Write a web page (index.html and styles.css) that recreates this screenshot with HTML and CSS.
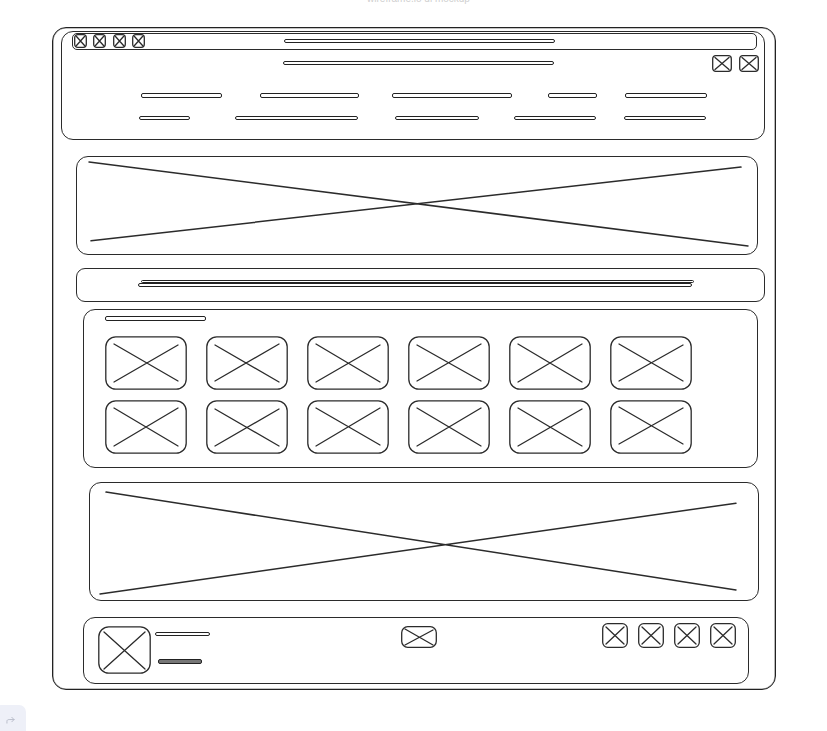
FILE: index.html
```html
<!DOCTYPE html>
<html lang="en">
<head>
<meta charset="UTF-8" />
<meta name="viewport" content="width=device-width, initial-scale=1" />
<title>Landing page wireframe</title>
<link rel="stylesheet" href="styles.css">
</head>
<body>

<div class="caption"><span>wireframe.io ui mockup</span></div>

<div class="frame">

  <!-- browser chrome + header nav -->
  <header class="head box">
    <div class="topbar">
      <svg class="chk" viewBox="0 0 13 14"><rect x="0.7" y="0.7" width="11.6" height="12.6" rx="3"/><path d="M2.5 2.5L10.5 11.5M10.5 2.5L2.5 11.5"/></svg>
      <svg class="chk" viewBox="0 0 13 14"><rect x="0.7" y="0.7" width="11.6" height="12.6" rx="3"/><path d="M2.5 2.5L10.5 11.5M10.5 2.5L2.5 11.5"/></svg>
      <svg class="chk" viewBox="0 0 13 14"><rect x="0.7" y="0.7" width="11.6" height="12.6" rx="3"/><path d="M2.5 2.5L10.5 11.5M10.5 2.5L2.5 11.5"/></svg>
      <svg class="chk" viewBox="0 0 13 14"><rect x="0.7" y="0.7" width="11.6" height="12.6" rx="3"/><path d="M2.5 2.5L10.5 11.5M10.5 2.5L2.5 11.5"/></svg>
      <span class="bar url"></span>
    </div>
    <div class="head-row">
      <span class="bar title"></span>
      <div class="head-icons">
        <svg class="ico-md" viewBox="0 0 20 17"><rect x="0.7" y="0.7" width="18.6" height="15.6" rx="3"/><path d="M3 2.5L17 14.5M17 2.5L3 14.5"/></svg>
        <svg class="ico-md" viewBox="0 0 20 17"><rect x="0.7" y="0.7" width="18.6" height="15.6" rx="3"/><path d="M3 2.5L17 14.5M17 2.5L3 14.5"/></svg>
      </div>
    </div>
    <nav class="nav-row one">
      <span class="bar"></span><span class="bar"></span><span class="bar"></span><span class="bar"></span><span class="bar"></span>
    </nav>
    <nav class="nav-row two">
      <span class="bar"></span><span class="bar"></span><span class="bar"></span><span class="bar"></span><span class="bar"></span>
    </nav>
  </header>

  <!-- hero image -->
  <section class="hero box">
    <svg viewBox="0 0 679 96" preserveAspectRatio="none"><path d="M12 5L670 88M14 83L663 10"/></svg>
  </section>

  <!-- headline strip -->
  <section class="strip box">
    <span class="bar line-a"></span>
    <span class="bar line-b"></span>
  </section>

  <!-- gallery -->
  <section class="gallery box">
    <span class="bar label"></span>
    <div class="tiles">
      <svg class="tile" viewBox="0 0 82 54"><rect x="0.8" y="0.8" width="80.4" height="52.4" rx="10"/><path d="M9 8L73 45M9 46L73 9"/></svg>
      <svg class="tile" viewBox="0 0 82 54"><rect x="0.8" y="0.8" width="80.4" height="52.4" rx="10"/><path d="M9 9L73 46M9 45L73 8"/></svg>
      <svg class="tile" viewBox="0 0 82 54"><rect x="0.8" y="0.8" width="80.4" height="52.4" rx="10"/><path d="M9 8L73 46M9 46L73 9"/></svg>
      <svg class="tile" viewBox="0 0 82 54"><rect x="0.8" y="0.8" width="80.4" height="52.4" rx="10"/><path d="M9 9L73 45M9 45L73 8"/></svg>
      <svg class="tile" viewBox="0 0 82 54"><rect x="0.8" y="0.8" width="80.4" height="52.4" rx="10"/><path d="M9 8L73 46M9 46L73 8"/></svg>
      <svg class="tile" viewBox="0 0 82 54"><rect x="0.8" y="0.8" width="80.4" height="52.4" rx="10"/><path d="M9 8L73 45M9 45L73 9"/></svg>
      <svg class="tile" viewBox="0 0 82 54"><rect x="0.8" y="0.8" width="80.4" height="52.4" rx="10"/><path d="M9 8L73 46M9 46L73 8"/></svg>
      <svg class="tile" viewBox="0 0 82 54"><rect x="0.8" y="0.8" width="80.4" height="52.4" rx="10"/><path d="M9 9L73 46M9 46L73 9"/></svg>
      <svg class="tile" viewBox="0 0 82 54"><rect x="0.8" y="0.8" width="80.4" height="52.4" rx="10"/><path d="M9 8L73 45M9 46L73 8"/></svg>
      <svg class="tile" viewBox="0 0 82 54"><rect x="0.8" y="0.8" width="80.4" height="52.4" rx="10"/><path d="M9 8L73 46M9 46L73 8"/></svg>
      <svg class="tile" viewBox="0 0 82 54"><rect x="0.8" y="0.8" width="80.4" height="52.4" rx="10"/><path d="M9 8L73 46M9 46L73 9"/></svg>
      <svg class="tile" viewBox="0 0 82 54"><rect x="0.8" y="0.8" width="80.4" height="52.4" rx="10"/><path d="M9 7L73 44M9 44L73 8"/></svg>
    </div>
  </section>

  <!-- second banner -->
  <section class="hero hero-2 box">
    <svg viewBox="0 0 667 116" preserveAspectRatio="none"><path d="M16 9L645 106M10 110L645 20"/></svg>
  </section>

  <!-- footer -->
  <footer class="foot box">
    <div class="foot-left">
      <svg class="avatar" viewBox="0 0 53 48"><rect x="0.8" y="0.8" width="51.4" height="46.4" rx="10"/><path d="M6 6L47 43M6 43L47 6"/></svg>
      <div class="foot-text">
        <span class="bar name"></span>
        <span class="bar sub"></span>
      </div>
    </div>
    <svg class="ico-mail" viewBox="0 0 36 22"><rect x="0.7" y="0.7" width="34.6" height="20.6" rx="6"/><path d="M4 3L32 19M4 19L32 4"/></svg>
    <div class="socials">
      <svg class="ico-sm" viewBox="0 0 26 25"><rect x="0.7" y="0.7" width="24.6" height="23.6" rx="5"/><path d="M4 4L22 21M22 4L4 21"/></svg>
      <svg class="ico-sm" viewBox="0 0 26 25"><rect x="0.7" y="0.7" width="24.6" height="23.6" rx="5"/><path d="M4 4L22 21M22 4L4 21"/></svg>
      <svg class="ico-sm" viewBox="0 0 26 25"><rect x="0.7" y="0.7" width="24.6" height="23.6" rx="5"/><path d="M4 4L22 21M22 4L4 21"/></svg>
      <svg class="ico-sm" viewBox="0 0 26 25"><rect x="0.7" y="0.7" width="24.6" height="23.6" rx="5"/><path d="M4 4L22 21M22 4L4 21"/></svg>
    </div>
  </footer>

</div>

<div class="corner-widget">
  <svg viewBox="0 0 10 9"><path d="M1 8V6C1 4.5 2 4 3.5 4H9M6.5 1.5L9 4L6.5 6.5"/></svg>
</div>

</body>
</html>
```

FILE: styles.css
```css
:root {
  --ink: #2b2b2b;
  --paper: #fff;
}
body {
  margin: 0;
  font-family: "Liberation Sans", Arial, sans-serif;
  background-color: var(--paper);
  color: var(--ink);
}

/* faint page caption, clipped at the top edge */
.caption {
  height: 4px;
  overflow: hidden;
  display: flex;
  justify-content: center;
  align-items: flex-end;
}
.caption span {
  font-size: 10px;
  line-height: 10px;
  color: #cfcfcf;
  padding-left: 10px;
}

svg rect,
svg path {
  fill: none;
  stroke: var(--ink);
  stroke-width: 1.3;
  stroke-linecap: round;
  vector-effect: non-scaling-stroke;
}

.frame {
  width: 724px;
  height: 663px;
  margin: 23px 0 0 52px;
  border: 1.6px solid #222;
  border-radius: 14px;
  box-sizing: border-box;
  display: flex;
  flex-direction: column;
  align-items: flex-start;
  box-shadow: inset 0 0 0 0.6px #888;
}
.box {
  border: 1.5px solid var(--ink);
  border-radius: 12px;
  box-sizing: border-box;
  flex: none;
}
.bar {
  display: block;
  height: 4.5px;
  border: 1.2px solid #222;
  border-radius: 2px;
  box-sizing: border-box;
  flex: none;
}

/* header */
.head {
  margin: 3px 0 0 8px;
  width: 704px;
  height: 109px;
  display: flex;
  flex-direction: column;
}
.topbar {
  margin: 0.5px 7.5px 0 9.5px;
  height: 17px;
  border: 1.3px solid var(--ink);
  border-radius: 5px;
  box-sizing: border-box;
  display: flex;
  align-items: center;
  gap: 6.5px;
  padding-left: 1px;
}
.chk {
  width: 13px;
  height: 14px;
  flex: none;
}
.url {
  margin-left: 132px;
  width: 271px;
}
.head-row {
  margin-top: 5px;
  height: 17px;
  display: flex;
  align-items: center;
  padding-right: 5px;
}
.title {
  margin-left: 221px;
  width: 271px;
}
.head-icons {
  margin-left: auto;
  display: flex;
  gap: 7px;
}
.ico-md {
  width: 20px;
  height: 17px;
}
.nav-row {
  display: flex;
  height: 4.5px;
}
.nav-row.one { margin-top: 21.5px; }
.nav-row.two { margin-top: 18px; }

.nav-row.one .bar:nth-child(1) { margin-left: 79px; width: 81px; }
.nav-row.one .bar:nth-child(2) { margin-left: 38px; width: 99px; }
.nav-row.one .bar:nth-child(3) { margin-left: 33px; width: 120px; }
.nav-row.one .bar:nth-child(4) { margin-left: 36px; width: 49px; }
.nav-row.one .bar:nth-child(5) { margin-left: 28px; width: 82px; }

.nav-row.two .bar:nth-child(1) { margin-left: 77px; width: 51px; }
.nav-row.two .bar:nth-child(2) { margin-left: 45px; width: 123px; }
.nav-row.two .bar:nth-child(3) { margin-left: 37px; width: 84px; }
.nav-row.two .bar:nth-child(4) { margin-left: 35px; width: 82px; }
.nav-row.two .bar:nth-child(5) { margin-left: 28px; width: 82px; }

/* image placeholders */
.hero {
  margin: 16px 0 0 23px;
  width: 682px;
  height: 99px;
}
.hero svg {
  display: block;
  width: 100%;
  height: 100%;
}
.hero svg path { stroke-width: 1.5; }
.hero-2 {
  margin: 14px 0 0 36px;
  width: 670px;
  height: 119px;
}

/* headline strip */
.strip {
  margin: 13px 0 0 23px;
  width: 689px;
  height: 34px;
  border-radius: 9px;
  display: flex;
  flex-direction: column;
  padding-top: 10.5px;
}
.strip .line-a {
  margin-left: 64px;
  width: 553px;
  height: 3.5px;
}
.strip .line-b {
  margin-left: 61px;
  width: 554px;
  height: 3.5px;
}

/* gallery */
.gallery {
  margin: 7px 0 0 30px;
  width: 675px;
  height: 159px;
  padding: 5.5px 0 0 20.5px;
}
.gallery .label {
  width: 101px;
  height: 5px;
}
.tiles {
  margin-top: 15px;
  display: grid;
  grid-template-columns: repeat(6, 82px);
  column-gap: 19px;
  row-gap: 10px;
}
.tile {
  display: block;
  width: 82px;
  height: 54px;
}

/* footer */
.foot {
  margin: 16px 0 0 30px;
  width: 666px;
  height: 67px;
  display: grid;
  grid-template-columns: 1fr auto 1fr;
  align-items: start;
  padding: 0 12px 0 14px;
}
.foot-left {
  display: flex;
  gap: 4px;
  margin-top: 7.5px;
}
.avatar {
  width: 53px;
  height: 48px;
  flex: none;
}
.foot-text {
  display: flex;
  flex-direction: column;
  padding-top: 6px;
}
.foot-text .name {
  width: 55px;
  height: 4px;
}
.foot-text .sub {
  margin: 23px 0 0 3px;
  width: 44px;
  height: 5px;
  border-width: 1.5px;
  background-color: #777;
}
.ico-mail {
  width: 36px;
  height: 22px;
  margin: 7.5px 0 0 3px;
}
.socials {
  justify-self: end;
  display: flex;
  gap: 10px;
  margin-top: 4.5px;
}
.ico-sm {
  width: 26px;
  height: 25px;
}

/* little floating widget at the window corner */
.corner-widget {
  position: fixed;
  left: -6px;
  top: 705px;
  width: 32px;
  height: 34px;
  background-color: #eef0f8;
  border-radius: 7px;
}
.corner-widget svg {
  position: absolute;
  left: 12px;
  top: 11px;
  width: 9px;
  height: 8px;
}
.corner-widget svg path {
  stroke: #b9bdca;
  stroke-width: 1;
}
```
